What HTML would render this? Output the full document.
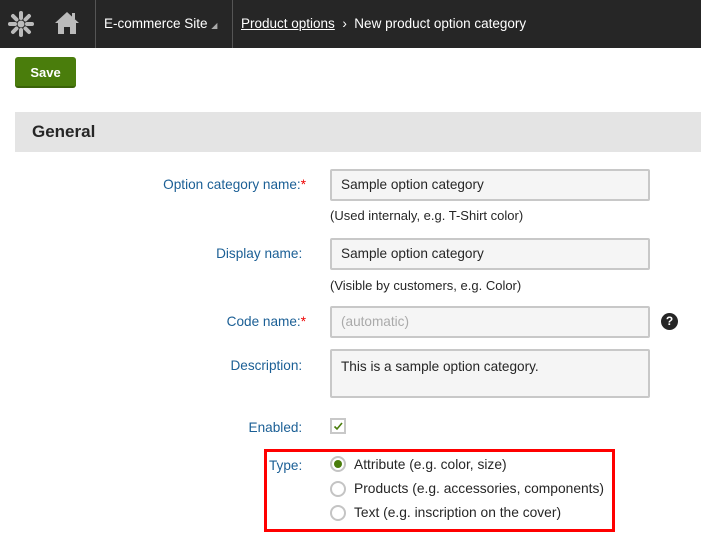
<!DOCTYPE html>
<html><head><style>
*{box-sizing:border-box;margin:0;padding:0}
body{width:701px;height:542px;background:#fff;font-family:"Liberation Sans",sans-serif;font-size:13px;color:#262626;position:relative;overflow:hidden}
.hdr{position:absolute;left:0;top:0;width:701px;height:48px;background:#262626;color:#fff}
.abs{position:absolute}
.div{position:absolute;top:0;width:1px;height:48px;background:#555}
.btn{position:absolute;left:15px;top:57px;width:61px;height:31px;background:#4a7d0c;border-bottom:2px solid #3a6308;border-radius:3px;color:#fff;font-weight:bold;font-size:13px;text-align:center;line-height:31px}
.gen{position:absolute;left:15px;top:112px;width:686px;height:40px;background:#e4e4e4;font-size:17px;font-weight:bold;padding-left:17px;line-height:40px;color:#262626}
.lbl{position:absolute;right:395px;color:#1b5f95;font-size:13.6px;text-align:right;white-space:nowrap}
.lbl b{color:#e00;font-weight:normal}
.inp{position:absolute;left:330px;width:320px;height:32px;background:#f5f5f5;border:2px solid #c8c8c8;border-radius:2px;padding:0 9px;line-height:28px;font-size:13.6px}
.hint{position:absolute;left:330px;font-size:13px}
.rad{position:absolute;left:330px;width:16px;height:16px;border-radius:50%;border:2px solid #c4c4c4;background:#fff}
.rt{position:absolute;left:354px;font-size:13.8px}
</style></head><body>
<div class="hdr">
<svg class="abs" style="left:7px;top:10px" width="28" height="28" viewBox="0 0 28 28"><g fill="#bbb"><circle cx="14" cy="14" r="3.5"/><g stroke="#bbb" stroke-width="4" stroke-linecap="round"><line x1="14" y1="3" x2="14" y2="8"/><line x1="14" y1="20" x2="14" y2="25"/><line x1="3" y1="14" x2="8" y2="14"/><line x1="20" y1="14" x2="25" y2="14"/><line x1="6" y1="6" x2="9.5" y2="9.5"/><line x1="18.5" y1="18.5" x2="22" y2="22"/><line x1="22" y1="6" x2="18.5" y2="9.5"/><line x1="9.5" y1="18.5" x2="6" y2="22"/></g></g></svg>
<svg class="abs" style="left:54px;top:10px" width="26" height="26" viewBox="0 0 26 26"><path d="M13 2 L1 13 L4 13 L4 24 L10 24 L10 17 L16 17 L16 24 L22 24 L22 13 L25 13 Z" fill="#bbb"/><rect x="18" y="3" width="3" height="6" fill="#bbb"/></svg>
<div class="div" style="left:95px"></div>
<div class="abs" style="left:104px;top:16px;font-size:13.5px">E-commerce Site <span style="font-size:8px;color:#aaa">◢</span></div>
<div class="div" style="left:232px"></div>
<div class="abs" style="left:241px;top:16px;font-size:13.5px"><u>Product options</u> &nbsp;›&nbsp; New product option category</div>
</div>
<div class="btn">Save</div>
<div class="gen">General</div>

<div class="lbl" style="top:177px">Option category name:<b>*</b></div>
<div class="inp" style="top:169px">Sample option category</div>
<div class="hint" style="top:208px">(Used internaly, e.g. T-Shirt color)</div>

<div class="lbl" style="top:246px">Display name:&nbsp;</div>
<div class="inp" style="top:238px">Sample option category</div>
<div class="hint" style="top:278px">(Visible by customers, e.g. Color)</div>

<div class="lbl" style="top:314px">Code name:<b>*</b></div>
<div class="inp" style="top:306px;color:#aaa">(automatic)</div>
<div class="abs" style="left:661px;top:313px;width:17px;height:17px;border-radius:50%;background:#262626;color:#fff;font-weight:bold;font-size:12px;text-align:center;line-height:17px">?</div>

<div class="lbl" style="top:358px">Description:&nbsp;</div>
<div class="inp" style="top:349px;height:49px;padding-top:2px">This is a sample option category.</div>

<div class="lbl" style="top:420px">Enabled:&nbsp;</div>
<div class="abs" style="left:330px;top:418px;width:16px;height:16px;border:2px solid #c8c8c8;background:#fff"><svg width="12" height="12" viewBox="0 0 12 12" style="position:absolute;left:0;top:0"><path d="M2.5 6.5 L5 9 L10 3" stroke="#4a7d0c" stroke-width="1.6" fill="none"/></svg></div>

<div class="abs" style="left:264px;top:449px;width:351px;height:83px;border:3px solid #f00"></div>
<div class="lbl" style="top:458px">Type:&nbsp;</div>
<div class="rad" style="top:456px"><div style="position:absolute;left:2px;top:2px;width:8px;height:8px;border-radius:50%;background:#4a7d0c"></div></div>
<div class="rt" style="top:457px">Attribute (e.g. color, size)</div>
<div class="rad" style="top:481px"></div>
<div class="rt" style="top:481px">Products (e.g. accessories, components)</div>
<div class="rad" style="top:505px"></div>
<div class="rt" style="top:505px">Text (e.g. inscription on the cover)</div>
</body></html>
